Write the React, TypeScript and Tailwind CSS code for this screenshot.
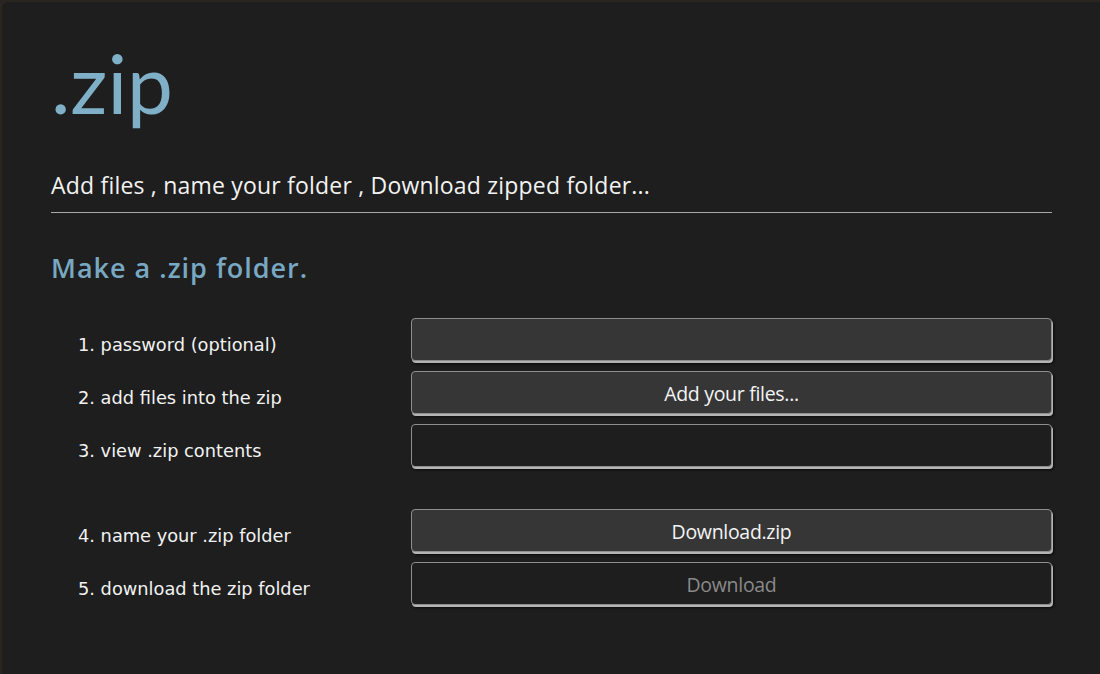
import React from "react";

const fieldBase =
  "h-[43px] w-full rounded-[4px] border border-[#8e8e8e] shadow-[1px_2px_0_#b4b4b4,2px_3px_3px_rgba(0,0,0,0.7)]";

function Row({ label, children }: { label: string; children: React.ReactNode }) {
  return (
    <div className="flex items-center">
      <div
        className="w-[360px] pl-[27px] pt-[11px] text-[17.8px] text-[#f2f2f2]"
        style={{ fontFamily: '"DejaVu Sans", Verdana, sans-serif' }}
      >
        {label}
      </div>
      <div className="flex-1">{children}</div>
    </div>
  );
}

export default function App() {
  const btnFont = { fontFamily: '"Open Sans", "Noto Sans", sans-serif' };
  const headFont = { fontFamily: '"Open Sans", Lato, sans-serif' };
  return (
    <div className="h-[674px] w-[1100px] overflow-hidden bg-[#2a251f] pl-[2px] pt-[2px]">
      <div
        className="h-full w-full rounded-tl-[6px] bg-[#1e1e1e] pl-[49px] pr-[48px]"
        style={{ fontFamily: 'Lato, "Open Sans", sans-serif' }}
      >
        <h1 className="pt-[30px] text-[82px] leading-[100px] font-normal text-[#80b0c8]">.zip</h1>
        <p className="mt-[38px] text-[23px] leading-[30px] tracking-[0.2px] text-[#f2f2f2]" style={headFont}>
          Add files , name your folder , Download zipped folder...
        </p>
        <div className="mt-[12px] h-px bg-[#a8a8a8]" />
        <h2
          className="mt-[37px] text-[27px] leading-[36px] font-semibold tracking-[1px] text-[#78a8c2]"
          style={headFont}
        >
          Make a .zip folder.
        </h2>
        <div className="mt-[32px] flex flex-col gap-[10px]">
          <Row label="1. password (optional)">
            <input type="password" className={`${fieldBase} block bg-[#363636] outline-none`} />
          </Row>
          <Row label="2. add files into the zip">
            <button
              className={`${fieldBase} bg-[#363636] pt-[2px] text-[19.5px] text-[#f4f4f4] tracking-[-0.3px]`}
              style={btnFont}
            >
              Add your files...
            </button>
          </Row>
          <Row label="3. view .zip contents">
            <div className={`${fieldBase} bg-[#1e1e1e]`} />
          </Row>
          <div className="h-[22px]" />
          <Row label="4. name your .zip folder">
            <input
              defaultValue="Download.zip"
              className={`${fieldBase} block bg-[#363636] pt-[2px] text-center text-[19.5px] text-[#f4f4f4] tracking-[-0.3px] outline-none`}
              style={btnFont}
            />
          </Row>
          <Row label="5. download the zip folder">
            <button
              disabled
              className={`${fieldBase} bg-[#1e1e1e] pt-[2px] text-[19.5px] text-[#8a8a8a] tracking-[-0.3px]`}
              style={btnFont}
            >
              Download
            </button>
          </Row>
        </div>
      </div>
    </div>
  );
}
